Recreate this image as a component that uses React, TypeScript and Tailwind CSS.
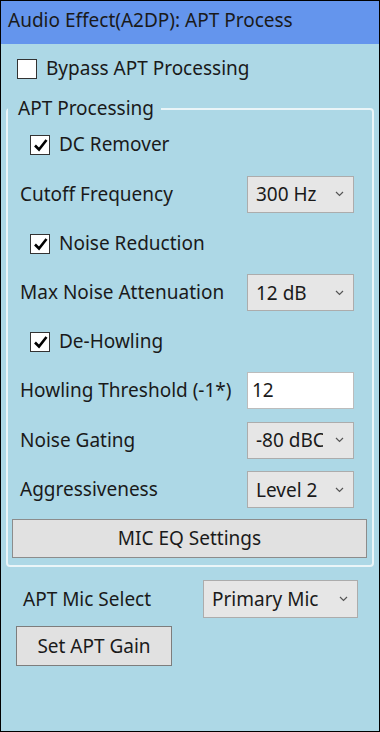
import React from "react";

function Chevron() {
  return (
    <svg width="9" height="6" viewBox="0 0 9 6" className="shrink-0">
      <path d="M1 1l3.5 3.5L8 1" fill="none" stroke="#555" strokeWidth="1.2" />
    </svg>
  );
}

function Check({ checked }: { checked: boolean }) {
  return (
    <div className="flex h-[20px] w-[20px] shrink-0 items-center justify-center border border-[#333] bg-white">
      {checked && (
        <svg width="15" height="14" viewBox="0 0 15 14">
          <path d="M2 7.5 L6 11.5 L13.5 2" fill="none" stroke="#000" strokeWidth="2.6" />
        </svg>
      )}
    </div>
  );
}

function Select({ value, cls }: { value: string; cls: string }) {
  return (
    <div className={`flex items-center border border-[#acacac] bg-[#e6e6e6] pl-[8px] pr-[9px] ${cls}`}>
      <div className="mr-[12px] min-w-0 flex-1 overflow-hidden whitespace-nowrap leading-[26px]">{value}</div>
      <Chevron />
    </div>
  );
}

function CheckRow({ label, h }: { label: string; h: string }) {
  return (
    <div className={`flex items-center gap-[9px] pl-[22px] ${h}`}>
      <Check checked />
      <span>{label}</span>
    </div>
  );
}

function SelectRow({ label, value, h }: { label: string; value: string; h: string }) {
  return (
    <div className={`flex items-center justify-between pl-[12px] pr-[18px] ${h}`}>
      <span>{label}</span>
      <Select value={value} cls="h-[37px] w-[107px]" />
    </div>
  );
}

export default function App() {
  return (
    <div className="flex h-[732px] w-[380px] flex-col border border-black bg-[#add8e6] font-['Noto_Sans',sans-serif] text-[19px] leading-none text-[#1a1a1a]">
      <div className="flex h-[43px] items-center bg-[#6495ed] pb-[4px] pl-[7px]">
        Audio Effect(A2DP): APT Process
      </div>
      <div className="flex h-[49px] items-center gap-[9px] pl-[16px]">
        <Check checked={false} />
        <span>Bypass APT Processing</span>
      </div>
      <fieldset className="mx-[5px] mt-[6px] rounded-[4px] border-2 border-[#eaf5f8] p-0">
        <legend className="pl-[10px] pr-[7px]">APT Processing</legend>
        <div className="flex flex-col pt-[2px] pb-[7px]">
          <CheckRow label="DC Remover" h="h-[49px]" />
          <SelectRow label="Cutoff Frequency" value="300 Hz" h="h-[50px]" />
          <CheckRow label="Noise Reduction" h="h-[49px]" />
          <SelectRow label="Max Noise Attenuation" value="12 dB" h="h-[49px]" />
          <CheckRow label="De-Howling" h="h-[49px]" />
          <div className="flex h-[49px] items-center justify-between pl-[12px] pr-[18px]">
            <span>Howling Threshold (-1*)</span>
            <div className="flex h-[37px] w-[107px] items-center border border-[#bcbcbc] bg-white pl-[4px]">12</div>
          </div>
          <SelectRow label="Noise Gating" value="-80 dBC" h="h-[50px]" />
          <SelectRow label="Aggressiveness" value="Level 2" h="h-[49px]" />
          <button className="mt-[5px] ml-[4px] mr-[5px] flex h-[39px] items-center justify-center border border-[#8c8c8c] bg-[#e1e1e1]">
            MIC EQ Settings
          </button>
        </div>
      </fieldset>
      <div className="mt-[13px] flex h-[38px] items-center pl-[22px] pr-[21px]">
        <span>APT Mic Select</span>
        <Select value="Primary Mic" cls="ml-auto h-[38px] w-[155px]" />
      </div>
      <button className="mt-[8px] ml-[15px] flex h-[40px] w-[156px] items-center justify-center border border-[#7d7d7d] bg-[#e1e1e1]">
        Set APT Gain
      </button>
    </div>
  );
}
